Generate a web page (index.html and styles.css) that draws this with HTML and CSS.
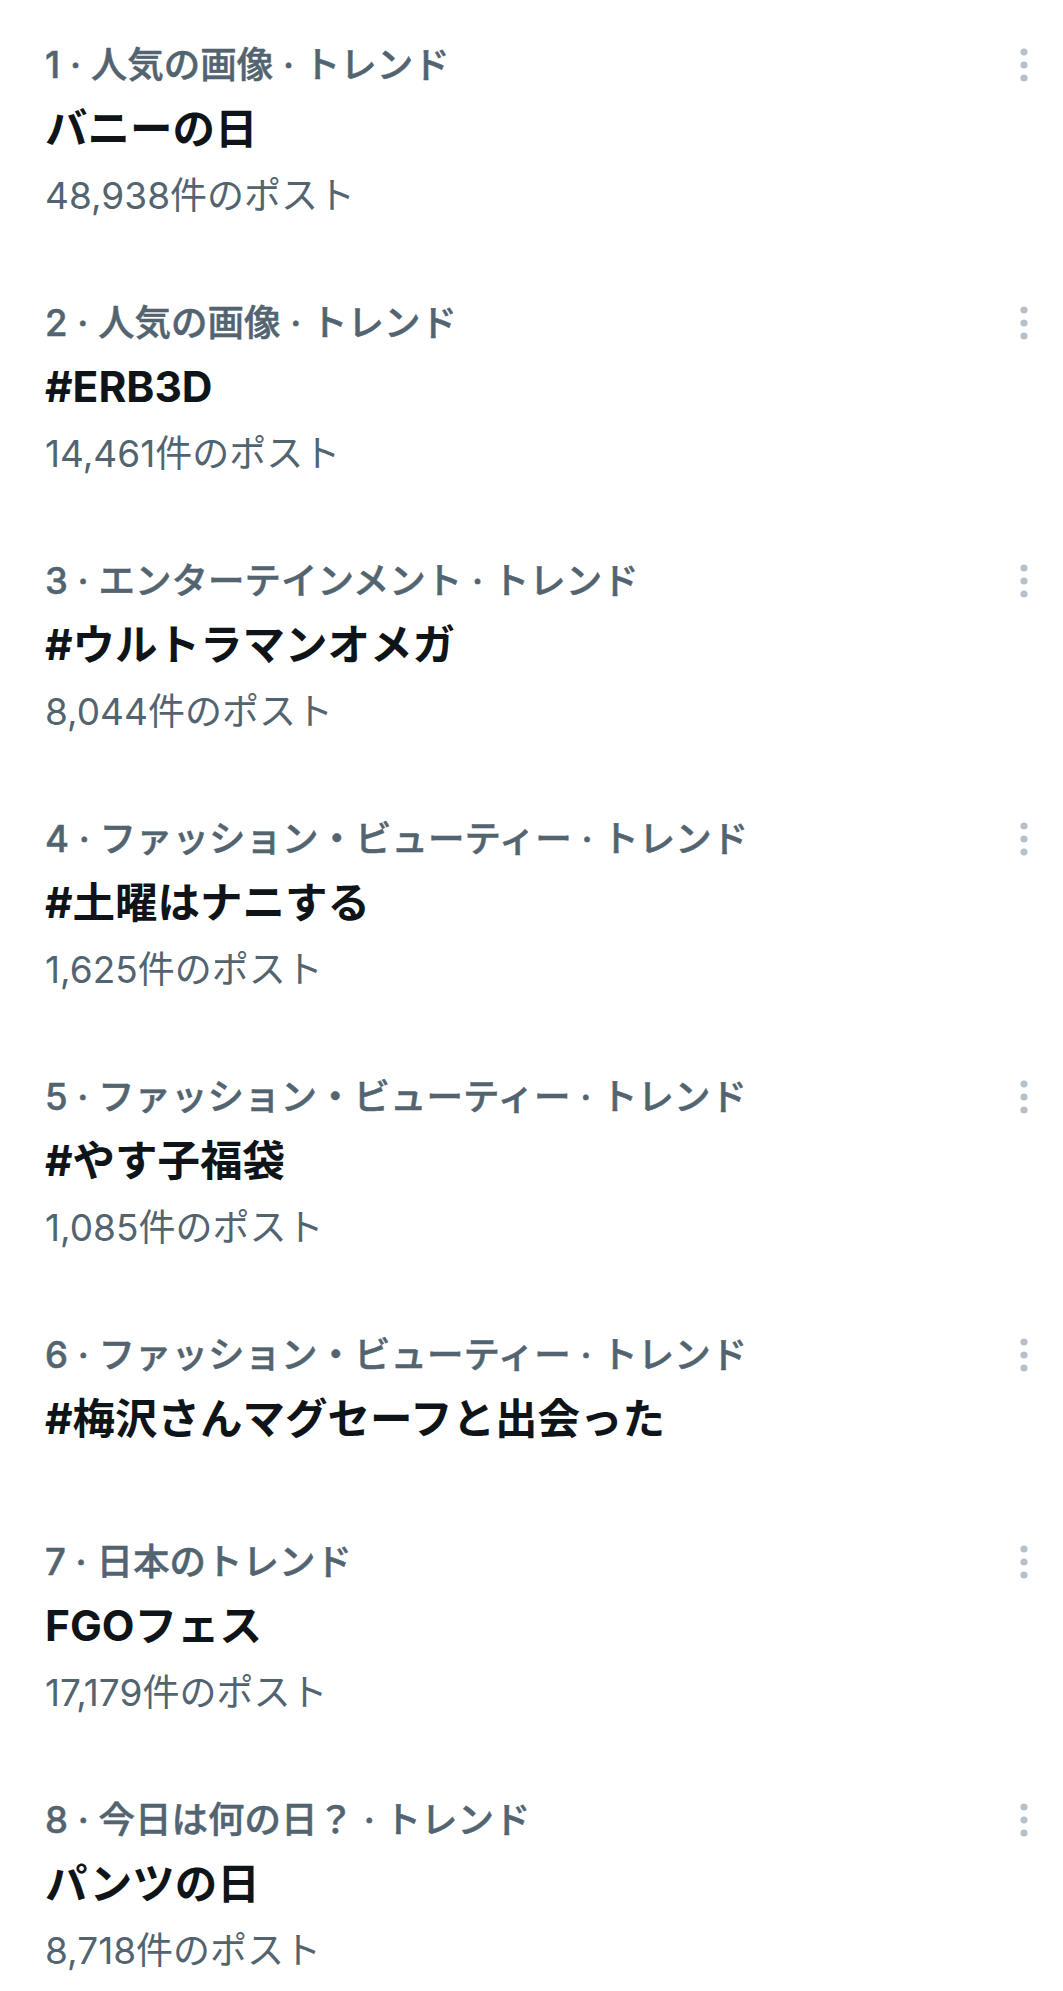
FILE: index.html
```html
<!DOCTYPE html>
<html lang="ja">
<head>
    <meta charset="UTF-8">
    <meta name="viewport" content="width=device-width, initial-scale=1.0">
    <title>トレンド</title>
    <link rel="stylesheet" href="styles.css">
</head>
<body>
    <ul class="trends">
        <li class="trend">
            <div class="trend-body">
                <div class="trend-meta">1 · 人気の画像 · トレンド</div>
                <div class="trend-name">バニーの日</div>
                <div class="trend-count">48,938件のポスト</div>
            </div>
            <button class="more" aria-label="その他">
                <svg viewBox="0 0 30 44" width="30" height="44"><circle cx="15" cy="9" r="3.6"/><circle cx="15" cy="22" r="3.6"/><circle cx="15" cy="35" r="3.6"/></svg>
            </button>
        </li>
        <li class="trend">
            <div class="trend-body">
                <div class="trend-meta">2 · 人気の画像 · トレンド</div>
                <div class="trend-name">#ERB3D</div>
                <div class="trend-count">14,461件のポスト</div>
            </div>
            <button class="more" aria-label="その他">
                <svg viewBox="0 0 30 44" width="30" height="44"><circle cx="15" cy="9" r="3.6"/><circle cx="15" cy="22" r="3.6"/><circle cx="15" cy="35" r="3.6"/></svg>
            </button>
        </li>
        <li class="trend">
            <div class="trend-body">
                <div class="trend-meta">3 · エンターテインメント · トレンド</div>
                <div class="trend-name">#ウルトラマンオメガ</div>
                <div class="trend-count">8,044件のポスト</div>
            </div>
            <button class="more" aria-label="その他">
                <svg viewBox="0 0 30 44" width="30" height="44"><circle cx="15" cy="9" r="3.6"/><circle cx="15" cy="22" r="3.6"/><circle cx="15" cy="35" r="3.6"/></svg>
            </button>
        </li>
        <li class="trend">
            <div class="trend-body">
                <div class="trend-meta">4 · ファッション・ビューティー · トレンド</div>
                <div class="trend-name">#土曜はナニする</div>
                <div class="trend-count">1,625件のポスト</div>
            </div>
            <button class="more" aria-label="その他">
                <svg viewBox="0 0 30 44" width="30" height="44"><circle cx="15" cy="9" r="3.6"/><circle cx="15" cy="22" r="3.6"/><circle cx="15" cy="35" r="3.6"/></svg>
            </button>
        </li>
        <li class="trend">
            <div class="trend-body">
                <div class="trend-meta">5 · ファッション・ビューティー · トレンド</div>
                <div class="trend-name">#やす子福袋</div>
                <div class="trend-count">1,085件のポスト</div>
            </div>
            <button class="more" aria-label="その他">
                <svg viewBox="0 0 30 44" width="30" height="44"><circle cx="15" cy="9" r="3.6"/><circle cx="15" cy="22" r="3.6"/><circle cx="15" cy="35" r="3.6"/></svg>
            </button>
        </li>
        <li class="trend">
            <div class="trend-body">
                <div class="trend-meta">6 · ファッション・ビューティー · トレンド</div>
                <div class="trend-name">#梅沢さんマグセーフと出会った</div>
            </div>
            <button class="more" aria-label="その他">
                <svg viewBox="0 0 30 44" width="30" height="44"><circle cx="15" cy="9" r="3.6"/><circle cx="15" cy="22" r="3.6"/><circle cx="15" cy="35" r="3.6"/></svg>
            </button>
        </li>
        <li class="trend">
            <div class="trend-body">
                <div class="trend-meta">7 · 日本のトレンド</div>
                <div class="trend-name">FGOフェス</div>
                <div class="trend-count">17,179件のポスト</div>
            </div>
            <button class="more" aria-label="その他">
                <svg viewBox="0 0 30 44" width="30" height="44"><circle cx="15" cy="9" r="3.6"/><circle cx="15" cy="22" r="3.6"/><circle cx="15" cy="35" r="3.6"/></svg>
            </button>
        </li>
        <li class="trend">
            <div class="trend-body">
                <div class="trend-meta">8 · 今日は何の日？ · トレンド</div>
                <div class="trend-name">パンツの日</div>
                <div class="trend-count">8,718件のポスト</div>
            </div>
            <button class="more" aria-label="その他">
                <svg viewBox="0 0 30 44" width="30" height="44"><circle cx="15" cy="9" r="3.6"/><circle cx="15" cy="22" r="3.6"/><circle cx="15" cy="35" r="3.6"/></svg>
            </button>
        </li>
    </ul>
</body>
</html>
```

FILE: styles.css
```css
body {
    margin: 0;
    background-color: #fff;
    font-family: Inter, "Noto Sans CJK JP", sans-serif;
    color: #0f1419;
}
.trends {
    list-style: none;
    margin: 0;
    padding: 0;
}
.trend {
    display: flex;
    align-items: flex-start;
    padding: 43px 24px 37px 45px;
}
.trend-body {
    flex: 1;
}
.trend-meta {
    font-size: 36.5px;
    line-height: 44px;
    font-weight: 500;
    color: #536471;
    -webkit-text-stroke: 0.5px #536471;
}
.trend-name {
    margin-top: 15px;
    margin-bottom: 14px;
    font-size: 42.5px;
    line-height: 54px;
    font-weight: 700;
    color: #0f1419;
}
.trend-count {
    font-size: 37px;
    line-height: 51px;
    color: #536471;
}
.more {
    padding: 0;
    border: none;
    background: none;
    cursor: pointer;
    line-height: 0;
}
.more svg {
    fill: #b6c1cc;
}
```
